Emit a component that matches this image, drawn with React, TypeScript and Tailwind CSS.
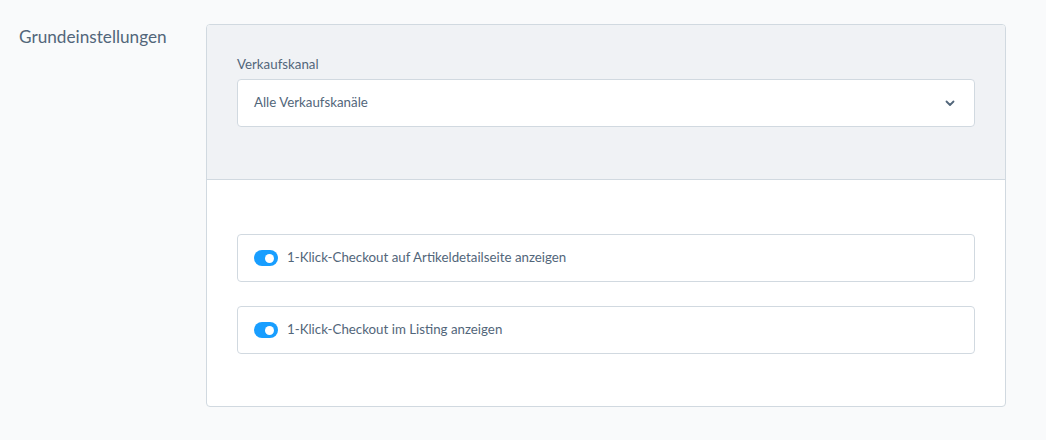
import React from 'react';

const Toggle: React.FC = () => (
  <span className="relative inline-flex h-4 w-6 shrink-0 items-center rounded-full bg-[#189eff]">
    <span className="absolute right-[4px] h-[9px] w-[9px] rounded-full bg-white" />
  </span>
);

const SwitchRow: React.FC<{ label: string }> = ({ label }) => (
  <div className="flex h-12 items-center gap-[9px] rounded border border-[#d1d9e0] bg-white pl-4">
    <Toggle />
    <span className="text-[13.3px] text-[#52667a]">{label}</span>
  </div>
);

export default function App() {
  return (
    <div
      className="flex min-h-screen items-start bg-[#f9fafb] pt-6 pl-[19px]"
      style={{ fontFamily: "'Source Sans Pro', Lato, 'Noto Sans', sans-serif" }}
    >
      <h2 className="w-[187px] shrink-0 pt-[1px] text-[17.2px] leading-6 text-[#52667a]">Grundeinstellungen</h2>
      <div className="w-[800px] overflow-hidden rounded border border-[#d1d9e0] bg-white">
        <div className="border-b border-[#d1d9e0] bg-[#f0f2f5] px-[30px] pt-[29px] pb-[52px]">
          <label className="mb-[5px] block text-[13.3px] leading-5 text-[#52667a]">Verkaufskanal</label>
          <div className="flex h-12 items-center justify-between rounded border border-[#d1d9e0] bg-white pl-4 pr-[18px]">
            <span className="text-[13.3px] text-[#52667a]">Alle Verkaufskanäle</span>
            <svg width="12" height="12" viewBox="0 0 12 12" fill="none">
              <path d="M2.5 4.5 6 8l3.5-3.5" stroke="#52667a" strokeWidth="1.8" strokeLinecap="round" strokeLinejoin="round" />
            </svg>
          </div>
        </div>
        <div className="flex flex-col gap-6 px-[30px] pt-[54px] pb-[52px]">
          <SwitchRow label="1-Klick-Checkout auf Artikeldetailseite anzeigen" />
          <SwitchRow label="1-Klick-Checkout im Listing anzeigen" />
        </div>
      </div>
    </div>
  );
}
